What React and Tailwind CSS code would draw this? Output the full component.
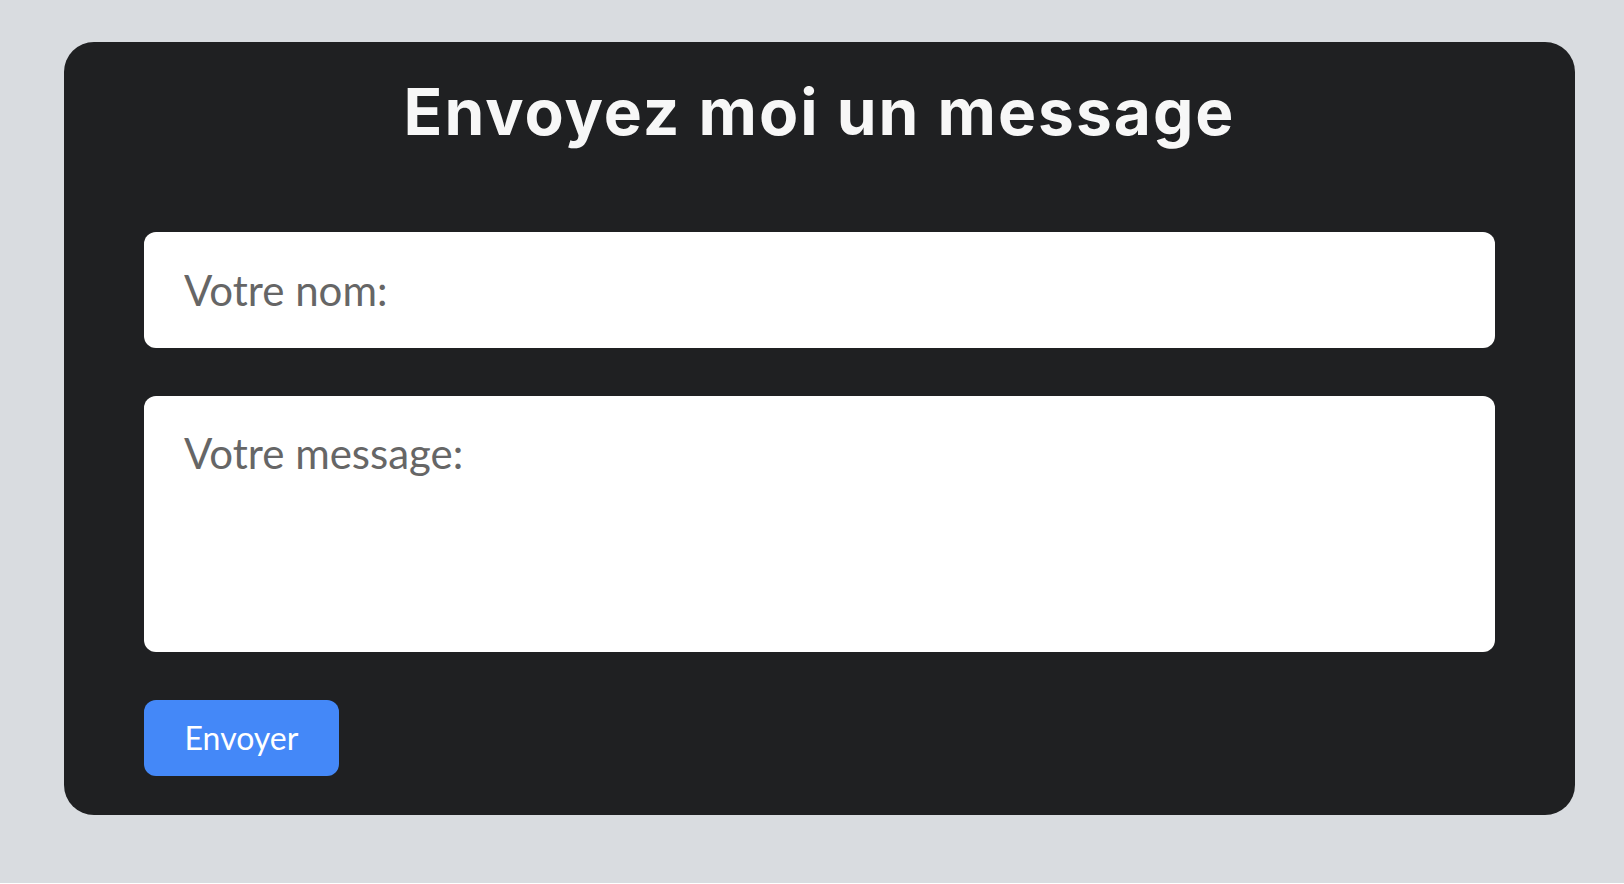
import React, { useState } from "react";

const ContactForm = () => {
  const [formData, setFormData] = useState({ name: "", message: "" });

  const handleChange = (e) => {
    const { name, value } = e.target;
    setFormData((prev) => ({ ...prev, [name]: value }));
  };

  const handleSubmit = (e) => {
    e.preventDefault();
  };

  return (
    <div className="ml-16 w-[1511px] mt-[42px] rounded-[30px] bg-[#1f2022] px-20 pt-[38px] pb-[39px]">
      <h2 className="text-center text-[64px] leading-[64px] font-bold tracking-[2px] text-[#f7f7f7] mb-[88px] font-['Inter',sans-serif]">
        Envoyez moi un message
      </h2>

      <form onSubmit={handleSubmit} className="flex flex-col">
        <input
          type="text"
          name="name"
          value={formData.name}
          onChange={handleChange}
          placeholder="Votre nom:"
          className="h-[116px] w-full rounded-xl bg-white px-10 text-[42px] text-[#333] placeholder:text-[#666] outline-none font-['Lato',sans-serif]"
        />
        <textarea
          name="message"
          value={formData.message}
          onChange={handleChange}
          placeholder="Votre message:"
          className="mt-12 h-[256px] w-full resize-none rounded-xl bg-white px-10 pt-[26px] text-[42px] text-[#333] placeholder:text-[#666] outline-none font-['Lato',sans-serif]"
        />
        <div className="mt-12">
          <button
            type="submit"
            className="h-[76px] w-[195px] rounded-xl bg-[#4488f8] text-[32px] text-white font-['Lato',sans-serif]"
          >
            Envoyer
          </button>
        </div>
      </form>
    </div>
  );
};

export default function App() {
  return (
    <div className="min-h-screen bg-[#d9dce0] pt-px -mt-px">
      <ContactForm />
    </div>
  );
}
